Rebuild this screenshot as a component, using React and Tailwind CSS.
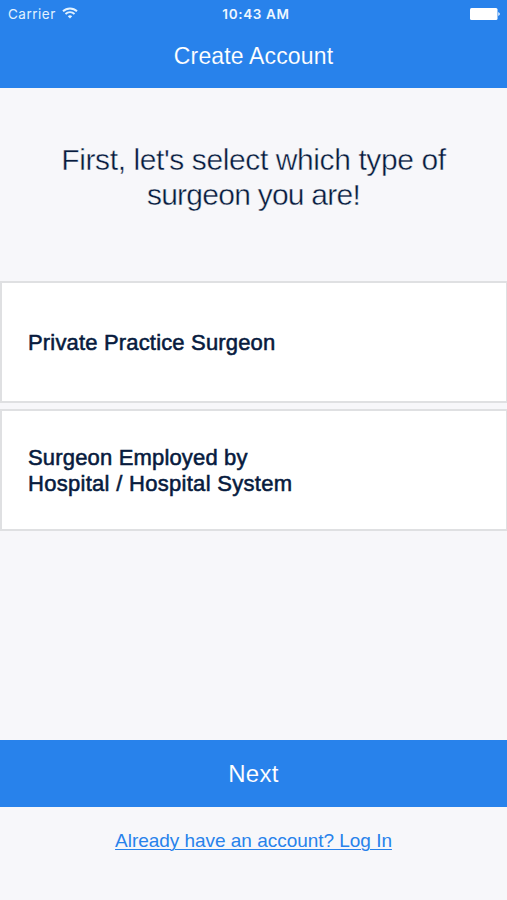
export default function App() {
  return (
    <main className="flex h-[900px] w-[507px] flex-col overflow-hidden bg-[#f7f7fa] font-['Liberation_Sans',sans-serif] text-[#071b3e]">
      <header className="h-[88px] bg-[#2882eb] text-white">
        <div className="grid h-7 grid-cols-3 items-center pl-2 pr-[6px] font-[Inter,sans-serif]">
          <div className="flex items-center gap-[6px] text-[13.5px] tracking-[0.5px] text-[#e2f2ff]">
            <span>Carrier</span>
            <svg className="-mt-[2px]" width="16" height="12" viewBox="0 0 16 12" fill="none" stroke="currentColor" strokeWidth="1.9">
              <path d="M1 4.3a10 10 0 0 1 14 0M3.5 7a6.4 6.4 0 0 1 9 0" />
              <path d="M5.8 9.2a3.2 3.2 0 0 1 4.4 0L8 11.5z" fill="currentColor" stroke="none" />
            </svg>
          </div>
          <span className="whitespace-nowrap pl-[3px] text-center text-[13.5px] font-semibold tracking-[0.65px] text-[#eef7ff]">10:43 AM</span>
          <svg className="-mt-px justify-self-end" width="31" height="12" viewBox="0 0 31 12" fill="currentColor">
            <rect width="27.5" height="12" rx="1.5" />
            <path d="M28.3 4q3 2 0 4z" />
          </svg>
        </div>
        <h1 className="mt-[11px] text-center text-[23px] leading-[34px] tracking-[0.15px] [-webkit-text-stroke:0.1px_#2882eb]">Create Account</h1>
      </header>
      <h2 className="h-[193px] pt-[54px] text-center text-[30px] font-light leading-[35px] tracking-[-0.4px] [-webkit-text-stroke:0.4px_#f7f7fa]">
        First, let's select which type of<br /><span className="tracking-[-0.75px]">surgeon you are!</span>
      </h2>
      <section className="flex flex-col gap-[6px] text-[22px] leading-[26px] tracking-[0.17px] [-webkit-text-stroke:0.55px_#071b3e]">
        <button className="flex h-[122px] items-center border-2 border-r border-[#dfe0e2] bg-white pl-[26px] pt-[2px] text-left">Private Practice Surgeon</button>
        <button className="flex h-[122px] items-center border-2 border-r border-[#dfe0e2] bg-white pl-[26px] pt-[2px] text-left">
          <span>Surgeon Employed by<br /><span className="tracking-[0.29px]">Hospital / Hospital System</span></span>
        </button>
      </section>
      <footer className="mt-auto h-[160px] text-center">
        <button className="h-[67px] w-full bg-[#2882eb] pt-px text-[24px] tracking-[0.3px] text-white [-webkit-text-stroke:0.1px_#2882eb]">Next</button>
        <a className="mt-[22px] block text-[19px] leading-6 tracking-[-0.03px] text-[#2882eb] underline decoration-1 underline-offset-2">Already have an account? Log In</a>
      </footer>
    </main>
  );
}
